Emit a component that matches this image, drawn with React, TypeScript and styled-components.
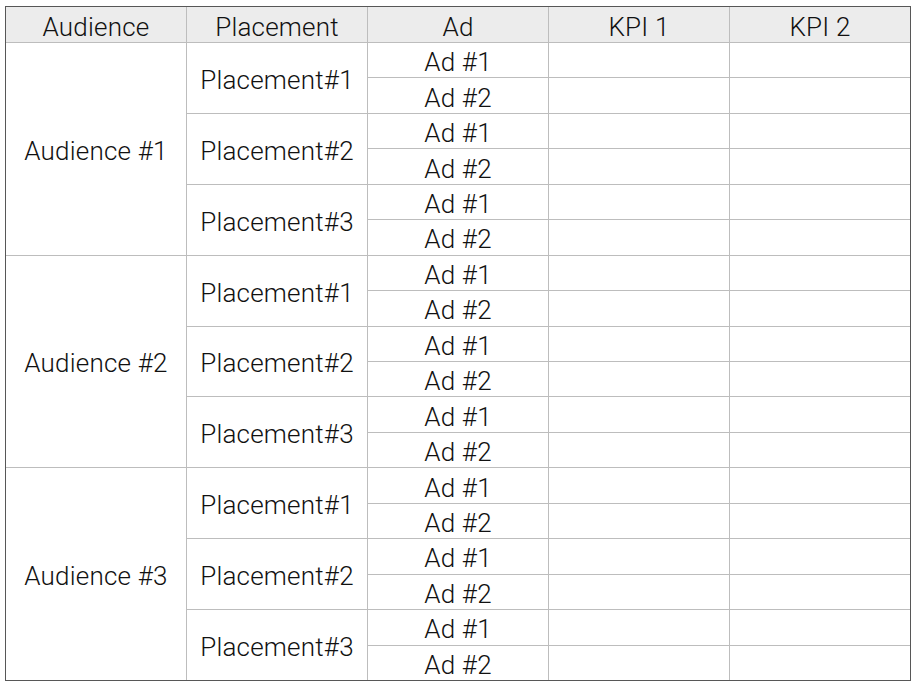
import React from "react";
import styled, { createGlobalStyle } from "styled-components";

const Global = createGlobalStyle`
  html, body { margin: 0; padding: 0; background: #ffffff; }
  body { padding: 6px 0 0 5px; font-family: Roboto, "Liberation Sans", Arial, sans-serif; }
`;

const Table = styled.div`
  display: grid;
  grid-template-columns: repeat(5, 180px);
  grid-template-rows: 35px repeat(18, 1fr);
  height: 673px;
  width: 904px;
  gap: 1px;
  background: #bdbdbd;
  border: 1px solid #575757;
`;

const Cell = styled.div<{ $span?: number; $head?: boolean }>`
  background: ${(p) => (p.$head ? "#ececec" : "#ffffff")};
  grid-row: span ${(p) => p.$span ?? 1};
  display: flex;
  align-items: center;
  justify-content: center;
  font-family: Roboto, "Liberation Sans", Arial, sans-serif;
  font-weight: 300;
  font-size: 26px;
  letter-spacing: 0.2px;
  color: #111111;
  line-height: 1;
  padding-top: 4px;
  box-sizing: border-box;
`;

const headers = ["Audience", "Placement", "Ad", "KPI 1", "KPI 2"];
const audiences = [1, 2, 3];
const placements = [1, 2, 3];
const ads = [1, 2];

export default function App() {
  const cells: React.ReactNode[] = [];
  headers.forEach((h) =>
    cells.push(
      <Cell key={"h" + h} $head>
        {h}
      </Cell>
    )
  );
  audiences.forEach((a) => {
    placements.forEach((p, pi) => {
      ads.forEach((ad, ai) => {
        if (pi === 0 && ai === 0)
          cells.push(
            <Cell key={`a${a}`} $span={6}>
              Audience #{a}
            </Cell>
          );
        if (ai === 0)
          cells.push(
            <Cell key={`a${a}p${p}`} $span={2}>
              Placement#{p}
            </Cell>
          );
        cells.push(<Cell key={`a${a}p${p}d${ad}`}>Ad #{ad}</Cell>);
        cells.push(<Cell key={`a${a}p${p}d${ad}k1`} />);
        cells.push(<Cell key={`a${a}p${p}d${ad}k2`} />);
      });
    });
  });
  return (
    <>
      <Global />
      <Table>{cells}</Table>
    </>
  );
}
